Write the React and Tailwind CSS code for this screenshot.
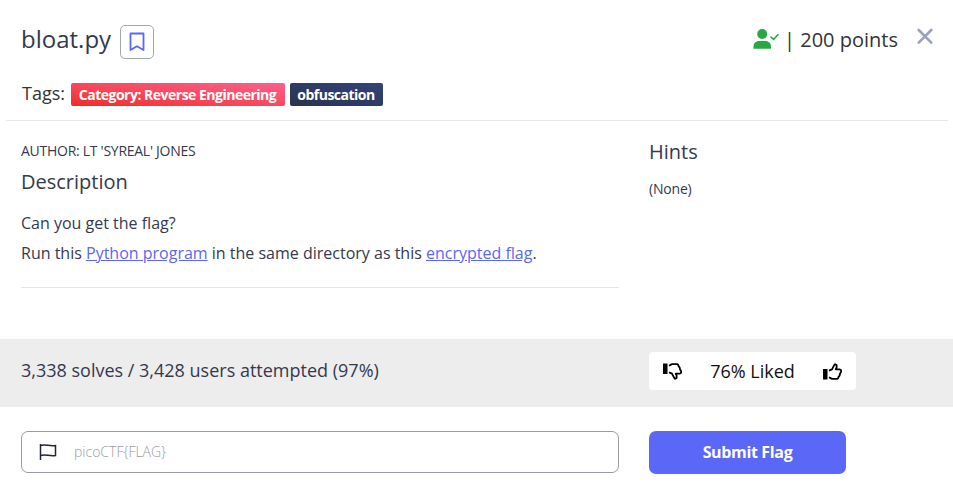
import React from 'react';

function ThumbIcon({ className }) {
  return (
    <svg className={className} width="19" height="17" viewBox="0 0 19 17">
      <path d="M0 6h4.500v10.500h-4.500z" fill="#000" />
      <path d="M6 7.600l3-1.200L11.200 2.200l.9-1 1.500.9v2.600l-.9 1.600h3.800l1.600.9v1.500l-1.100 2-.3 1.700-1 1.300-.6 1.500-1 .7H9L6 14.300" fill="none" stroke="#000" strokeWidth="1.800" strokeLinejoin="round" />
    </svg>
  );
}

function Header() {
  return (
    <header className="ml-[6px] mr-[5px] h-[121px] border-b border-[#e8e8e8] pl-[15px] pr-[15px]">
      <div className="flex h-[82px] items-start justify-between">
        <div className="flex items-start pt-[22px]">
          <h1 className="text-[24px] leading-[34px]">bloat.py</h1>
          <button className="ml-[9px] mt-[3px] flex h-[34px] w-[34px] items-center justify-center rounded-[5px] border border-[#a2a8b2]">
            <svg width="16" height="20" viewBox="0 0 16 20" fill="none" stroke="#5b67f5" strokeWidth="1.8"><path d="M1.500 1.500h13v16.500L8 14.200 1.500 18z" strokeLinejoin="round" /></svg>
          </button>
        </div>
        <div className="flex items-start pt-[25px] text-[#333]">
          <svg className="mt-[3px]" width="26" height="21" viewBox="0 0 26 21" fill="#28a745">
            <circle cx="9.200" cy="6" r="5" />
            <path d="M.5 20.800v-2c0-3.500 2.500-5.700 5.500-5.700h6.500c3 0 5.500 2.200 5.500 5.700v2z" />
            <path d="M18 9l2.600 2.500L25 6.500" fill="none" stroke="#28a745" strokeWidth="1.600" strokeLinecap="round" strokeLinejoin="round" />
          </svg>
          <span className="ml-[5px] text-[20px] leading-[30px]">| 200 points</span>
          <svg className="ml-[19px] mt-[3px]" width="16" height="16" viewBox="0 0 16 16" stroke="#9aa2bb" strokeWidth="2.600" strokeLinecap="round"><path d="M1.700 2l12.600 12.600M14.300 2L1.700 14.600" /></svg>
        </div>
      </div>
      <div className="flex items-center text-[#333]">
        <span className="w-[50px] pb-[2px] pl-px text-[18px] leading-[22px]">Tags:</span>
        <span className="flex h-[23px] w-[214px] items-center justify-center whitespace-nowrap rounded-[2px] bg-linear-to-tr from-[#f32a1c] to-[#fb5f8d] pr-px text-[14px] font-bold tracking-[-0.5px] text-white">Category: Reverse Engineering</span>
        <span className="ml-[5px] flex h-[23px] w-[93px] items-center justify-center rounded-[2px] bg-linear-to-tr from-[#29334e] to-[#34437a] pr-px text-[14px] font-bold tracking-[-0.5px] text-white">obfuscation</span>
      </div>
    </header>
  );
}

export default function App() {
  return (
    <main className="h-[495px] w-[953px] overflow-hidden bg-white font-['Open_Sans',sans-serif] text-[#34394e]">
      <Header />
      <section className="flex h-[218px] pl-[21px]">
        <div className="w-[598px]">
          <div className="h-[167px] border-b border-[#e5e5e5] pt-[19px]">
            <p className="text-[14px] leading-[21px] tracking-[-0.27px]">AUTHOR: LT 'SYREAL' JONES</p>
            <h2 className="mt-[6px] text-[20px] leading-[30px]">Description</h2>
            <p className="mt-[11px] text-[16px] leading-[30px]">Can you get the flag?</p>
            <p className="whitespace-nowrap text-[16px] leading-[30px]">Run this <a className="text-[#5b67f5] underline">Python program</a> in the same directory as this <a className="text-[#5b67f5] underline">encrypted flag</a>.</p>
          </div>
        </div>
        <aside className="ml-[30px] pt-[16px]">
          <h2 className="text-[20px] leading-[30px]">Hints</h2>
          <p className="mt-[11px] text-[14px] leading-[21px] tracking-[-0.2px]">(None)</p>
        </aside>
      </section>
      <section className="flex h-[68px] items-start bg-[#ededed] pl-[21px]">
        <p className="w-[628px] pt-[18px] text-[18px] leading-[27px]">3,338 solves / 3,428 users attempted (97%)</p>
        <div className="mt-[13px] flex h-[38px] w-[207px] items-center justify-between rounded-[4px] bg-white px-[14px] text-[#111]">
          <ThumbIcon className="-scale-y-100" />
          <span className="text-[18px]">76% Liked</span>
          <ThumbIcon />
        </div>
      </section>
      <section className="flex pl-[21px] pt-[24px]">
        <div className="flex h-[42px] w-[598px] items-center rounded-[7px] border border-[#9b9ba5] pl-[17px]">
          <svg width="18" height="18" viewBox="0 0 18 18" fill="none" stroke="#20263c" strokeWidth="1.5"><path d="M1.500 1v16M1.500 2.500c5-2 8 1 15 0v10c-7 1-10-2-15 0" /></svg>
          <span className="ml-[17px] pb-[2px] text-[14px] font-light text-[#999ba3]">picoCTF{'{FLAG}'}</span>
        </div>
        <button className="ml-[30px] h-[43px] w-[197px] rounded-[7px] bg-[#5b67f7] pb-[2px] text-[16px] font-bold tracking-[-0.35px] text-white">Submit Flag</button>
      </section>
    </main>
  );
}
